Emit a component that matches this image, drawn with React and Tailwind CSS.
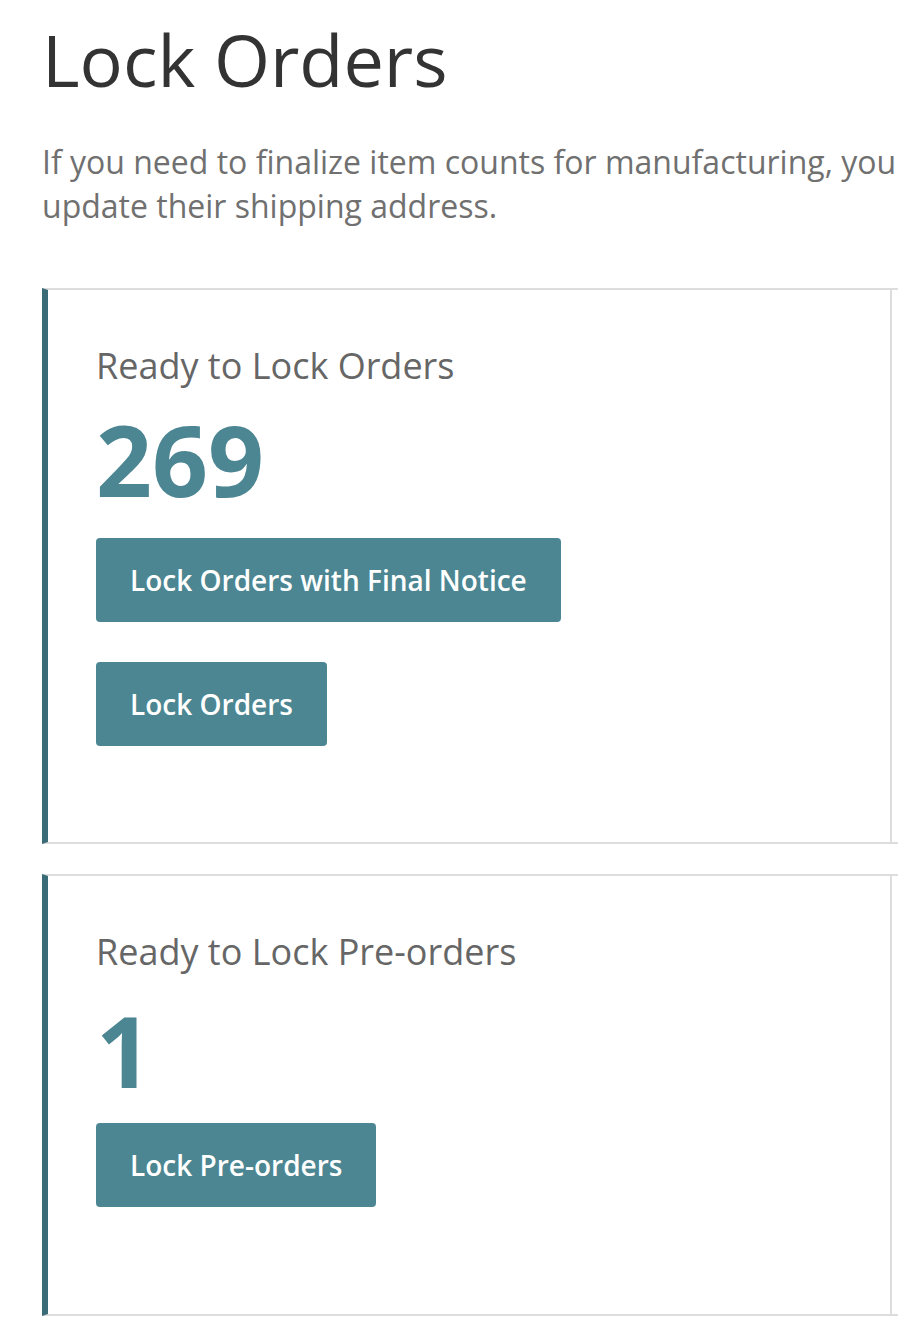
import { useState } from 'react'

const cards = [
    { title: "Ready to Lock Orders", count: 269, buttons: ["Lock Orders with Final Notice", "Lock Orders"], numMt: "mt-[18px]", btnMt: "mt-[29px]", pb: "pb-[96px]" },
    { title: "Ready to Lock Pre-orders", count: 1, buttons: ["Lock Pre-orders"], numMt: "mt-[23px]", btnMt: "mt-[23px]", pb: "pb-[107px]" },
]

function LockCard({ card }) {
    return (
        <div className="flex border-l-[6px] border-y-2 border-y-[#dddddd] border-l-[#3a6c78]">
            <div className={"w-[844px] border-r-2 border-[#dddddd] pl-[48px] pt-[51px] " + card.pb}>
                <h2 className="text-[36px] leading-[50px] text-[#666666]">{card.title}</h2>
                <div className={"text-[98px] leading-[100px] font-bold text-[#4b8692] " + card.numMt}>{card.count}</div>
                <div className={"flex flex-col items-start gap-[40px] " + card.btnMt}>
                    {card.buttons.map((b) => (
                        <button key={b} className="h-[84px] px-[34px] rounded-[4px] bg-[#4b8692] text-white text-[28px] font-semibold">{b}</button>
                    ))}
                </div>
            </div>
            <div className="flex-1"></div>
        </div>
    )
}

export default function App() {
    return (
        <div className="w-[898px] h-[1320px] overflow-hidden bg-white font-['Open_Sans',sans-serif]">
            <div className="w-[1400px] pl-[42px] pt-[23px]">
                <h1 className="text-[72px] leading-[72px] text-[#333333] font-normal">Lock Orders</h1>
                <p className="mt-[45px] text-[32px] leading-[44px] text-[#707070] whitespace-nowrap">
                    If you need to finalize item counts for manufacturing, you<br />update their shipping address.
                </p>
                <div className="mt-[60px] flex flex-col gap-[30px]">
                    {cards.map((c) => <LockCard key={c.title} card={c} />)}
                </div>
            </div>
        </div>
    )
}
